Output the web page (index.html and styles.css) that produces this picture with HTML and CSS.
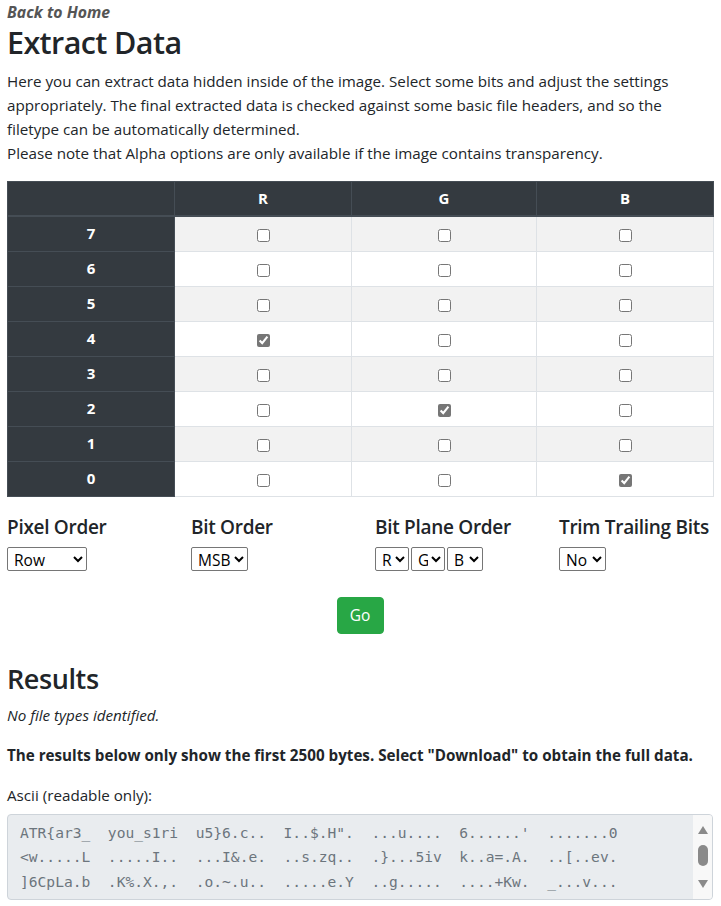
FILE: index.html
```html
<!DOCTYPE html>
<html lang="en">
<head>
<meta charset="utf-8">
<title>Extract Data</title>
<link rel="stylesheet" href="styles.css">
</head>
<body>
<div class="page">
  <a class="back" href="#">Back to Home</a>
  <h1 class="title">Extract Data</h1>
  <p class="intro">Here you can extract data hidden inside of the image. Select some bits and adjust the settings appropriately. The final extracted data is checked against some basic file headers, and so the filetype can be automatically determined.<br>Please note that Alpha options are only available if the image contains transparency.</p>

  <table class="bits">
    <colgroup>
      <col class="c-bit"><col class="c-r"><col class="c-g"><col class="c-b">
    </colgroup>
    <thead>
      <tr><th></th><th>R</th><th>G</th><th>B</th></tr>
    </thead>
    <tbody>
      <tr><th>7</th><td><input type="checkbox"></td><td><input type="checkbox"></td><td><input type="checkbox"></td></tr>
      <tr><th>6</th><td><input type="checkbox"></td><td><input type="checkbox"></td><td><input type="checkbox"></td></tr>
      <tr><th>5</th><td><input type="checkbox"></td><td><input type="checkbox"></td><td><input type="checkbox"></td></tr>
      <tr><th>4</th><td><input type="checkbox" checked></td><td><input type="checkbox"></td><td><input type="checkbox"></td></tr>
      <tr><th>3</th><td><input type="checkbox"></td><td><input type="checkbox"></td><td><input type="checkbox"></td></tr>
      <tr><th>2</th><td><input type="checkbox"></td><td><input type="checkbox" checked></td><td><input type="checkbox"></td></tr>
      <tr><th>1</th><td><input type="checkbox"></td><td><input type="checkbox"></td><td><input type="checkbox"></td></tr>
      <tr><th>0</th><td><input type="checkbox"></td><td><input type="checkbox"></td><td><input type="checkbox" checked></td></tr>
    </tbody>
  </table>

  <div class="options">
    <div class="opt">
      <h5 class="opt-label">Pixel Order</h5>
      <div class="sel-row"><select class="sel sel-row-order"><option>Row</option><option>Column</option></select></div>
    </div>
    <div class="opt">
      <h5 class="opt-label">Bit Order</h5>
      <div class="sel-row"><select class="sel sel-msb"><option>MSB</option><option>LSB</option></select></div>
    </div>
    <div class="opt">
      <h5 class="opt-label">Bit Plane Order</h5>
      <div class="sel-row">
        <select class="sel sel-plane"><option>R</option><option>G</option><option>B</option></select>
        <select class="sel sel-plane"><option>G</option><option>R</option><option>B</option></select>
        <select class="sel sel-plane sel-plane-b"><option>B</option><option>R</option><option>G</option></select>
      </div>
    </div>
    <div class="opt">
      <h5 class="opt-label">Trim Trailing Bits</h5>
      <div class="sel-row"><select class="sel sel-no"><option>No</option><option>Yes</option></select></div>
    </div>
  </div>

  <div class="go-row"><button class="go" type="button">Go</button></div>

  <h3 class="results-title">Results</h3>
  <p class="none"><em>No file types identified.</em></p>
  <p class="note"><strong>The results below only show the first 2500 bytes. Select "Download" to obtain the full data.</strong></p>
  <label class="ascii-label" for="ascii">Ascii (readable only):</label>
  <div class="ascii-box">
    <textarea id="ascii" class="ascii" rows="3" readonly wrap="off">ATR{ar3_  you_s1ri  u5}6.c..  I..$.H".  ...u....  6......'  .......0
&lt;w.....L  .....I..  ...I&amp;.e.  ..s.zq..  .}...5iv  k..a=.A.  ..[..ev.
]6CpLa.b  .K%.X.,.  .o.~.u..  .....e.Y  ..g.....  ....+Kw.  _...v...
.....Q..  ..r.....  ....h.(.  ..W.....  .'..j...  ...%....  ...n..8.
..;...x.  .....b..  Z.......  ...)..k.  ........  .d....=.  .....T..
...m....  ..7...F.  ......u.  .#.....e  ...R....  ......y.  .:......</textarea>
    <div class="scrollbar" aria-hidden="true">
      <span class="arrow arrow-up"></span>
      <span class="thumb"></span>
      <span class="track"></span>
      <span class="arrow arrow-down"></span>
    </div>
  </div>
</div>
</body>
</html>
```

FILE: styles.css
```css
html, body {
  margin: 0;
  padding: 0;
}

body {
  font-family: "Open Sans", "Noto Sans", sans-serif;
  font-size: 15.2px;
  line-height: 1.5;
  color: #212529;
  background: #fff;
}

.page {
  padding: 0 8px 0 7px;
}

.back {
  display: block;
  font-weight: 700;
  font-style: italic;
  color: #555;
  text-decoration: none;
  line-height: 24px;
  font-size: 15.8px;
}

.title {
  margin: 0 0 8px;
  font-size: 30.5px;
  font-weight: 600;
  line-height: 1.2;
  letter-spacing: -0.6px;
}

.intro {
  margin: 0 0 16px;
  line-height: 24px;
}

/* table */
.bits {
  width: 706px;
  border-collapse: collapse;
  margin-bottom: 18px;
  table-layout: fixed;
}

.c-bit { width: 167px; }
.c-r { width: 177px; }
.c-g { width: 185px; }
.c-b { width: 177px; }

.bits th,
.bits td {
  height: 34px;
  padding: 0;
  text-align: center;
  vertical-align: middle;
  border: 1px solid #dee2e6;
  font-size: 15px;
}

.bits thead th {
  background: #343a40;
  color: #fff;
  border-color: #454d55;
  border-bottom-width: 2px;
  font-weight: 700;
  height: 33px;
}

.bits tbody th {
  background: #343a40;
  color: #fff;
  border-color: #454d55;
  font-weight: 700;
}

.bits tbody tr:nth-child(odd) td {
  background: #f2f2f2;
}

.bits input[type="checkbox"] {
  width: 13px;
  height: 13px;
  margin: 0;
  vertical-align: middle;
  accent-color: #767676;
}

/* options */
.options {
  display: grid;
  grid-template-columns: repeat(4, 184px);
}

.opt-label {
  margin: 0 0 8px;
  font-size: 19px;
  font-weight: 600;
  line-height: 24px;
  letter-spacing: -0.3px;
}

.sel-row {
  display: flex;
  gap: 2px;
}

.sel {
  height: 24px;
  font-family: "Open Sans", sans-serif;
  font-size: 15.5px;
  color: #000;
  border: 1px solid #767676;
  border-radius: 2px;
  background: #fff;
  padding: 0 0 0 2px;
}

.sel-row-order { width: 80px; }
.sel-msb { width: 57px; }
.sel-plane { width: 34px; }
.sel-plane-b { width: 36px; }
.sel-no { width: 47px; }

.go-row {
  display: flex;
  justify-content: center;
  padding: 26px 0 29px;
}

.go {
  width: 47px;
  height: 37px;
  background: #28a745;
  border: 1px solid #28a745;
  border-radius: 4px;
  color: #fff;
  font-family: "Open Sans", sans-serif;
  font-size: 15.5px;
  line-height: 24px;
  padding: 0;
}

.results-title {
  margin: 0 0 8px;
  font-size: 27px;
  font-weight: 600;
  line-height: 1.2;
  letter-spacing: -0.4px;
}

.none {
  margin: 0 0 16px;
  line-height: 24px;
}

.note {
  margin: 0 0 16px;
  line-height: 24px;
}

.ascii-label {
  display: block;
  margin-bottom: 7px;
  line-height: 24px;
}

.ascii-box {
  display: flex;
  box-sizing: border-box;
  width: 706px;
  height: 86px;
  background: #e9ecef;
  border: 1px solid #ced4da;
  border-radius: 4px;
  overflow: hidden;
}

.ascii {
  flex: 1;
  min-width: 0;
  margin: 0;
  padding: 6px 12px;
  background: transparent;
  border: 0;
  color: #6c757d;
  font-family: "DejaVu Sans Mono", "Liberation Mono", monospace;
  font-size: 14.6px;
  line-height: 24.5px;
  resize: none;
  overflow: hidden;
  outline: none;
}

.scrollbar {
  width: 19px;
  display: flex;
  flex-direction: column;
  align-items: center;
  background: #f8f8f8;
  padding: 11px 0 11px;
  box-sizing: border-box;
}

.arrow {
  width: 0;
  height: 0;
  border-left: 5.5px solid transparent;
  border-right: 5.5px solid transparent;
}

.arrow-up {
  border-bottom: 8px solid #8a8a8a;
}

.arrow-down {
  border-top: 8px solid #8a8a8a;
}

.thumb {
  width: 10px;
  height: 21px;
  margin-top: 11px;
  border-radius: 5px;
  background: #8a8a8a;
}

.track {
  flex: 1;
}
```
